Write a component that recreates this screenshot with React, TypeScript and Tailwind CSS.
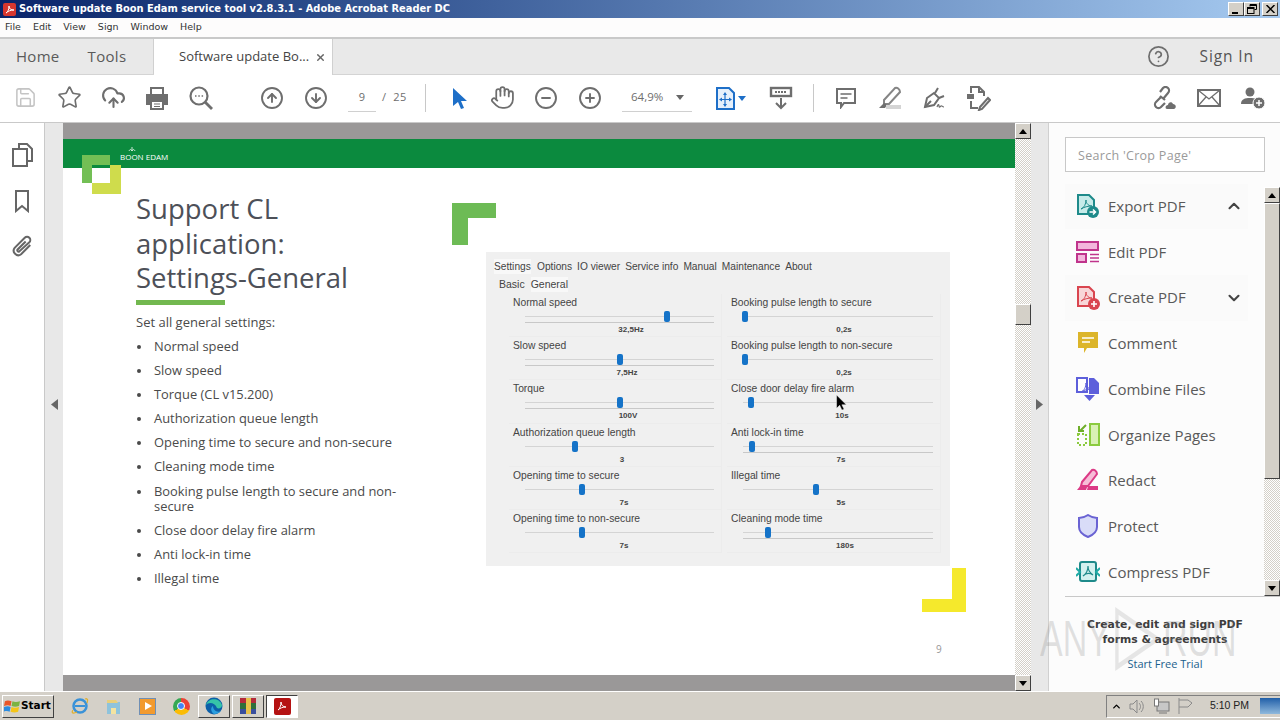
import { ReactNode } from 'react'
import {
  CircleArrowDown,
  CircleArrowUp,
  CircleHelp,
  CircleMinus,
  CirclePlus,
  ChevronDown,
  ChevronUp,
  CloudUpload,
  Hand,
  Save,
  Star,
  X,
} from 'lucide-react'

const menus = ['File', 'Edit', 'View', 'Sign', 'Window', 'Help']

const bullets = [
  'Normal speed',
  'Slow speed',
  'Torque (CL v15.200)',
  'Authorization queue length',
  'Opening time to secure and non-secure',
  'Cleaning mode time',
  'Booking pulse length to secure and non-secure',
  'Close door delay fire alarm',
  'Anti lock-in time',
  'Illegal time',
]

const sliders = [
  { label: 'Normal speed', thumb: 155, value: '32,5Hz', valueX: 122, double: true },
  { label: 'Booking pulse length to secure', thumb: 15, value: '0,2s', valueX: 117, double: false },
  { label: 'Slow speed', thumb: 108, value: '7,5Hz', valueX: 118, double: true },
  { label: 'Booking pulse length to non-secure', thumb: 15, value: '0,2s', valueX: 117, double: false },
  { label: 'Torque', thumb: 108, value: '100V', valueX: 119, double: true },
  { label: 'Close door delay fire alarm', thumb: 21, value: '10s', valueX: 115, double: false },
  { label: 'Authorization queue length', thumb: 63, value: '3', valueX: 113, double: false },
  { label: 'Anti lock-in time', thumb: 22, value: '7s', valueX: 114, double: true },
  { label: 'Opening time to secure', thumb: 70, value: '7s', valueX: 115, double: false },
  { label: 'Illegal time', thumb: 86, value: '5s', valueX: 114, double: false },
  { label: 'Opening time to non-secure', thumb: 70, value: '7s', valueX: 115, double: false },
  { label: 'Cleaning mode time', thumb: 38, value: '180s', valueX: 118, double: true },
]

const ToolSlot = ({ children, className = 'w-[44px]' }: { children: ReactNode; className?: string }) => (
  <div className={`${className} h-[30px] flex items-center justify-center shrink-0`}>{children}</div>
)

const Divider = () => <div className="w-px h-[28px] bg-[#c8c8c8] shrink-0" />

const WinBtn = ({ children }: { children: ReactNode }) => (
  <div className="w-[16px] h-[14px] bg-[#d4d0c8] border border-t-white border-l-white border-r-[#404040] border-b-[#404040] flex items-center justify-center">
    {children}
  </div>
)

const PanelIcon = ({ children }: { children: ReactNode }) => (
  <svg width="24" height="24" viewBox="0 0 24 24" fill="none" className="shrink-0">
    {children}
  </svg>
)

const Swirl = ({ color }: { color: string }) => (
  <path d="M5 15c3-1 5-5 5-9 0 4 3 6 6 6-4 0-8 1-11 3z" stroke={color} strokeWidth="1" fill="none" />
)

const tools: { name: string; chevron?: 'up' | 'down'; icon: ReactNode }[] = [
  {
    name: 'Export PDF',
    chevron: 'up',
    icon: (
      <>
        <path d="M2 1h11l5 5v14H2z" fill="#c6ebe9" stroke="#1e8a8a" strokeWidth="2" />
        <Swirl color="#1e8a8a" />
        <circle cx="17" cy="18" r="6" fill="#1e8a8a" />
        <path d="M13.5 18h6M17 15.5l2.5 2.5-2.5 2.5" stroke="#fff" strokeWidth="1.5" />
      </>
    ),
  },
  {
    name: 'Edit PDF',
    icon: (
      <>
        <rect x="1" y="2" width="21" height="8" fill="#f3b6dc" stroke="#c0348c" strokeWidth="2" />
        <rect x="1" y="14" width="9" height="8" fill="#f3b6dc" stroke="#c0348c" strokeWidth="2" />
        <path d="M14 14.5h9M14 18h9M14 21.5h9" stroke="#c0348c" strokeWidth="1.3" />
      </>
    ),
  },
  {
    name: 'Create PDF',
    chevron: 'down',
    icon: (
      <>
        <path d="M2 1h11l5 5v14H2z" fill="#f8d6d8" stroke="#d9454f" strokeWidth="2" />
        <Swirl color="#d9454f" />
        <circle cx="18" cy="18" r="6" fill="#d9454f" />
        <path d="M15 18h6M18 15v6" stroke="#fff" strokeWidth="1.6" />
      </>
    ),
  },
  {
    name: 'Comment',
    icon: (
      <>
        <path d="M2 1h20v16H11l-3 5v-5H2z" fill="#dcb52a" />
        <path d="M6 7h12M6 11h8" stroke="#fff" strokeWidth="1.5" />
      </>
    ),
  },
  {
    name: 'Combine Files',
    icon: (
      <>
        <path d="M1 1h10v14H1z" fill="#fff" stroke="#5d5fdb" strokeWidth="2" />
        <path d="M13 1h5l5 5v11H13z" fill="#5d5fdb" />
        <Swirl color="#5d5fdb" />
        <path d="M8 18h11l-5.500 6z" fill="#5d5fdb" />
      </>
    ),
  },
  {
    name: 'Organize Pages',
    icon: (
      <>
        <rect x="14" y="1" width="9" height="21" fill="#d9f1b5" stroke="#8bcb3f" strokeWidth="2" />
        <path d="M2 11h8v11H2z" stroke="#8bcb3f" strokeWidth="2" strokeDasharray="2 2" />
        <path d="M10 2 4 8M3 3v5h5" stroke="#6fae2a" strokeWidth="2" />
      </>
    ),
  },
  {
    name: 'Redact',
    icon: (
      <>
        <path d="M6 14 16 2c2-1 5 1 5 4L12 18H5z" fill="#f7bcd7" stroke="#dc3a86" strokeWidth="2" />
        <path d="M1 22l4-5h7l-2 5zM12 18h10v4H11z" fill="#dc3a86" />
      </>
    ),
  },
  {
    name: 'Protect',
    icon: (
      <path d="M12 1c3 2 6 3 9 3v9c0 5-4 8-9 10-5-2-9-5-9-10V4c3 0 6-1 9-3z" fill="#d9dcf8" stroke="#6a63d3" strokeWidth="2" />
    ),
  },
  {
    name: 'Compress PDF',
    icon: (
      <>
        <rect x="4" y="2" width="16" height="19" rx="2" fill="#d3f1ef" stroke="#1e8a8a" strokeWidth="2" />
        <path d="M12 6c0 5-2 8-5 10 3-3 7-3 10-1-3-2-5-5-5-9z" stroke="#1e8a8a" strokeWidth="1.2" />
        <path d="M0 8l4 4-4 4M24 8l-4 4 4 4" stroke="#1eaaa5" strokeWidth="2" fill="none" />
      </>
    ),
  },
]

const checker = 'bg-[repeating-conic-gradient(#d4d0c8_0_25%,#ffffff_0_50%)] bg-[length:2px_2px]'
const raised = 'bg-[#d4d0c8] border border-t-white border-l-white border-r-[#404040] border-b-[#404040]'

const ScrollButton = ({ up }: { up: boolean }) => (
  <div className={`${raised} w-[16px] h-[16px] shrink-0 flex items-center justify-center`}>
    <svg width="8" height="5" viewBox="0 0 8 5">
      <path d={up ? 'M4 0l4 5H0z' : 'M0 0h8L4 5z'} fill="#000" />
    </svg>
  </div>
)

const App = () => {
  return (
    <div className="relative w-[1280px] h-screen overflow-hidden flex flex-col bg-white font-['Open_Sans',sans-serif] text-[#4b4b4b]">
      {/* title bar */}
      <div className="h-[18px] shrink-0 flex items-center bg-gradient-to-r from-[#0a246a] to-[#a6caf0] pl-[3px] pr-[2px]">
        <svg width="13" height="13" viewBox="0 0 13 13" className="mr-[3px] shrink-0">
          <rect width="13" height="13" rx="2" fill="#d7372f" />
          <path d="M3 10c2-1 3-4 3-7 0 3 2 4 5 4-3 0-6 1-8 3z" stroke="#fff" fill="none" />
        </svg>
        <span className="font-['DejaVu_Sans',sans-serif] font-bold text-[9.900px] text-white whitespace-nowrap">
          Software update Boon Edam service tool v2.8.3.1 - Adobe Acrobat Reader DC
        </span>
        <div className="ml-auto flex gap-[2px]">
          <div className="flex">
            <WinBtn>
              <div className="w-[6px] h-[2px] bg-black mt-[7px] -ml-[2px]" />
            </WinBtn>
            <WinBtn>
              <svg width="10" height="10" viewBox="0 0 10 10" fill="none" stroke="#000">
                <path d="M3 2.500V.5h6.500v5H7.500" />
                <path d="M3 1.500h6.500" />
                <rect x=".5" y="3.500" width="6.500" height="6" />
                <path d="M.5 4.500h6.500" />
              </svg>
            </WinBtn>
          </div>
          <WinBtn>
            <svg width="9" height="8" viewBox="0 0 9 8" stroke="#000" strokeWidth="1.500">
              <path d="M.5 0l8 8M8.500 0l-8 8" />
            </svg>
          </WinBtn>
        </div>
      </div>

      {/* menu bar */}
      <div className="h-[19px] shrink-0 flex items-center gap-[12px] pl-[5px] bg-[#fdfcfc] font-['DejaVu_Sans',sans-serif] text-[9.500px] text-[#333]">
        {menus.map((m) => (
          <span key={m}>{m}</span>
        ))}
      </div>

      {/* tabs */}
      <div className="h-[38px] shrink-0 flex items-stretch bg-[#e9e9e9] border-t-2 border-[#c9c9c9] border-b border-b-[#d4d4d4]">
        <div className="w-[154px] flex items-center gap-[28px] pl-[16px] text-[15px] tracking-[0.3px] text-[#5a5a5a] border-r border-[#d0d0d0]">
          <span>Home</span>
          <span>Tools</span>
        </div>
        <div className="w-[179px] -mb-px bg-white flex items-center pl-[25px] text-[13px] text-[#444] border-r border-[#d0d0d0]">
          <span className="whitespace-nowrap">Software update Bo...</span>
          <X size={11} strokeWidth={3} className="ml-[6px] text-[#666]" />
        </div>
        <div className="ml-auto flex items-center pr-[26px]">
          <CircleHelp size={23} strokeWidth={1.8} className="text-[#6e6e6e] mr-[30px]" />
          <span className="text-[15.500px] tracking-[0.9px] text-[#555]">Sign In</span>
        </div>
      </div>

      {/* toolbar */}
      <div className="h-[47px] shrink-0 flex items-center pl-[3px] pb-[2px] text-[#6e6e6e]">
        <ToolSlot><Save size={23} strokeWidth={1.6} className="text-[#c4c4c4]" /></ToolSlot>
        <ToolSlot><Star size={25} strokeWidth={1.6} /></ToolSlot>
        <ToolSlot><CloudUpload size={25} strokeWidth={2} /></ToolSlot>
        <ToolSlot className="w-[43px]">
          <svg width="24" height="24" viewBox="0 0 24 24" fill="none">
            <path d="M6 8V2h12v6" stroke="currentColor" strokeWidth="2" />
            <path d="M1 8h22v11h-4v-4H5v4H1z" fill="currentColor" />
            <path d="M6 15h12v8H6z" stroke="currentColor" strokeWidth="2" />
            <path d="M9 18h6M9 20.500h6" stroke="currentColor" strokeWidth="1.200" />
          </svg>
        </ToolSlot>
        <ToolSlot className="w-[45px]">
          <svg width="26" height="26" viewBox="0 0 26 26" fill="none" stroke="currentColor" strokeWidth="2.2">
            <circle cx="11" cy="11" r="8.500" />
            <path d="M17 17l7 7" strokeWidth="2.800" />
            <path d="M7 11h1.500M10.300 11h1.500M13.600 11h1.500" strokeWidth="1.500" />
          </svg>
        </ToolSlot>
        <div className="w-[27px] shrink-0" />
        <ToolSlot><CircleArrowUp size={24} strokeWidth={1.9} /></ToolSlot>
        <ToolSlot><CircleArrowDown size={24} strokeWidth={1.9} /></ToolSlot>
        <div className="ml-[10px] w-[28px] h-[29px] border-b border-[#d0d0d0] flex items-center justify-center text-[11px] shrink-0">9</div>
        <div className="w-[49px] pl-[6px] text-[11px] tracking-[0.5px] whitespace-nowrap shrink-0">/&nbsp;&nbsp;25</div>
        <Divider />
        <ToolSlot className="w-[40px] ml-[14px]">
          <svg width="16" height="22" viewBox="0 0 16 22"><path d="M1 1l14 13H9l3 7-3 1-3-7-5 4z" fill="#1e6fc8" /></svg>
        </ToolSlot>
        <ToolSlot><Hand size={25} strokeWidth={1.7} /></ToolSlot>
        <ToolSlot><CircleMinus size={24} strokeWidth={1.9} /></ToolSlot>
        <ToolSlot><CirclePlus size={24} strokeWidth={1.9} /></ToolSlot>
        <div className="ml-[10px] w-[70px] h-[29px] border-b border-[#d0d0d0] flex items-center justify-between pl-[9px] pr-[8px] text-[11.500px] shrink-0">
          <span>64,9%</span>
          <svg width="8" height="5" viewBox="0 0 8 5"><path d="M0 0h8L4 5z" fill="#666" /></svg>
        </div>
        <ToolSlot className="w-[44px] ml-[14px]">
          <svg width="38" height="24" viewBox="0 0 38 24" fill="none">
            <path d="M8 2h12l5 5v16H8z" fill="#e6f0fb" stroke="#1e6fc8" strokeWidth="2" />
            <path d="M16 9v9M12 13.500h9" stroke="#1e6fc8" strokeWidth="1.200" />
            <path d="M16 6l-2 3h4zM16 21l-2-3h4zM10 13.500l3-2v4zM23 13.500l-3-2v4z" fill="#1e6fc8" />
            <path d="M29 10h8l-4 5z" fill="#1e6fc8" />
          </svg>
        </ToolSlot>
        <ToolSlot className="w-[44px] ml-[9px]">
          <svg width="24" height="24" viewBox="0 0 24 24" fill="none" stroke="currentColor">
            <rect x="2" y="2" width="20" height="8" strokeWidth="2.400" />
            <path d="M6 6h12" strokeWidth="2" strokeDasharray="2 1" />
            <path d="M12 12v10M7 17l5 5 5-5" strokeWidth="2" />
          </svg>
        </ToolSlot>
        <div className="ml-[10px]"><Divider /></div>
        <ToolSlot className="w-[44px] ml-[10px]">
          <svg width="22" height="22" viewBox="0 0 22 22" fill="none" stroke="currentColor" strokeWidth="2">
            <path d="M2 2h18v14H9l-3 4v-4H2z" />
            <path d="M5.500 7h11M5.500 11h7" strokeWidth="1.300" />
          </svg>
        </ToolSlot>
        <ToolSlot>
          <svg width="26" height="24" viewBox="0 0 26 24" fill="none">
            <path d="M7 14 18 2c2-1 5 1 5 4L12 18H7z" stroke="#858585" strokeWidth="2" />
            <path d="M2 22l5-5 3 2-2 3z" fill="#6e6e6e" />
            <rect x="9" y="19" width="15" height="4" fill="#d4d4d4" />
          </svg>
        </ToolSlot>
        <ToolSlot>
          <svg width="24" height="24" viewBox="0 0 24 24" fill="none" stroke="currentColor" strokeWidth="2">
            <path d="M3 21l2-9 7-5 5 5-5 7z" />
            <path d="M13 7l3-5M17 12l5-2M3 21l6-6" />
            <path d="M15 21c1-3 2-3 2-1s1 1 2 0 1 1 3 1" strokeWidth="1.200" />
          </svg>
        </ToolSlot>
        <ToolSlot>
          <svg width="26" height="26" viewBox="0 0 26 26" fill="none" stroke="currentColor" strokeWidth="2">
            <path d="M6 8V2h8l5 5v4M6 16v7h7M14 2v5h5" />
            <rect x="2" y="9" width="7" height="5" fill="currentColor" stroke="none" />
            <path d="M15 22l8-9 2 2-8 9-3 1z" />
          </svg>
        </ToolSlot>
        <div className="ml-auto flex pr-[5px]">
          <ToolSlot>
            <svg width="26" height="24" viewBox="0 0 26 24" fill="none" stroke="currentColor" strokeWidth="2.200">
              <path d="M9 11l-5 5a3.500 3.500 0 0 0 5 5l4-4M11 13l5-6a3.500 3.500 0 0 0-5-5L8 6" />
              <path d="M8 10l5 4" />
              <path d="M15 23c-2 0-2-4 1-4 0-3 4-4 5-1 3 0 4 4 1 5z" fill="currentColor" stroke="none" />
            </svg>
          </ToolSlot>
          <ToolSlot>
            <svg width="24" height="20" viewBox="0 0 24 20" fill="none" stroke="currentColor" strokeWidth="2">
              <rect x="1" y="2" width="22" height="16" />
              <path d="M1 2l11 9 11-9M1 18l8-9M23 18l-8-9" strokeWidth="1.300" />
            </svg>
          </ToolSlot>
          <ToolSlot>
            <svg width="26" height="24" viewBox="0 0 26 24">
              <circle cx="10" cy="6" r="4.500" fill="#6e6e6e" />
              <path d="M1 18c0-5 4-6 9-6s8 1 8 3v3z" fill="#6e6e6e" />
              <circle cx="19" cy="17" r="6" fill="#6e6e6e" stroke="#fff" />
              <path d="M16 17h6M19 14v6" stroke="#fff" strokeWidth="1.500" />
            </svg>
          </ToolSlot>
        </div>
      </div>

      {/* main */}
      <div className="flex-1 min-h-0 flex border-t border-[#c9c9c9]">
        {/* left rail */}
        <div className="w-[45px] shrink-0 border-r border-[#c9c9c9] flex flex-col items-center gap-[21px] pt-[19px] text-[#666]">
          <svg width="22" height="26" viewBox="0 0 22 26" fill="none" stroke="currentColor" strokeWidth="2">
            <path d="M8 6V2h8l5 5v12h-5" />
            <path d="M2 7h14v17H2z" />
          </svg>
          <svg width="16" height="24" viewBox="0 0 16 24" fill="none" stroke="currentColor" strokeWidth="2">
            <path d="M2 2h12v20l-6-5-6 5z" />
          </svg>
          <svg width="22" height="24" viewBox="0 0 24 24" fill="none" stroke="currentColor" strokeWidth="2.200">
            <path d="M21 11 11 21a5 5 0 0 1-7-7L15 3a3.500 3.500 0 0 1 5 5L9 18a1.500 1.500 0 0 1-2-2l9-9" />
          </svg>
        </div>
        <div className="w-[18px] shrink-0 bg-[#e8e8e8] flex items-center justify-center pb-[5px]">
          <svg width="7" height="11" viewBox="0 0 7 11"><path d="M7 0v11L0 5.500z" fill="#666" /></svg>
        </div>

        {/* document */}
        <div className="w-[952px] shrink-0 flex flex-col bg-[#9a9898]">
          <div className="h-[16px] shrink-0" />
          <div className="relative h-[536px] shrink-0 bg-white flex flex-col overflow-hidden">
            <div className="h-[29px] shrink-0 bg-[#0b8a3e] flex flex-col items-start justify-end pl-[57px] pb-[7px]">
              <svg width="8" height="6" viewBox="0 0 8 6" fill="none" stroke="#fff" strokeWidth="0.800" className="ml-[8px] mb-px">
                <path d="M1 5c1-2 2-2 3 0 1-2 2-2 3 0M4 5V1" />
              </svg>
              <span className="text-[8px] leading-none text-white whitespace-nowrap">BOON EDAM</span>
            </div>
            <div className="absolute left-[19px] top-[16px] w-[39px] h-[39px]">
              <div className="absolute left-[10px] top-[10px] w-[29px] h-[29px] bg-[#cfdc4c]" />
              <div className="absolute left-0 top-0 w-[28px] h-[28px] bg-[#73bf55]" />
              <div className="absolute left-[10px] top-[10px] w-[18px] h-[18px] bg-white border-t-[3px] border-[#0b8a3e]" />
            </div>
            <div className="flex flex-1 min-h-0">
              <div className="w-[423px] shrink-0 pl-[73px] pt-[24px] text-[#4a4a4a]">
                <h1 className="text-[27.500px] leading-[34.500px] text-[#4d5058]">
                  Support CL<br />application:<br />Settings-General
                </h1>
                <div className="w-[89px] h-[5px] bg-[#72b84f] mt-[4px] mb-[9px]" />
                <p className="text-[13px] leading-[17px]">Set all general settings:</p>
                <ul className="mt-[8.500px] flex flex-col gap-[9px] text-[12.900px] leading-[15.100px] w-[263px]">
                  {bullets.map((b) => (
                    <li key={b} className="flex">
                      <span className="w-[18px] shrink-0 pl-[1px] pt-[6px]">
                        <span className="block w-[4px] h-[4px] rounded-full bg-[#4a4a4a]" />
                      </span>
                      <span>{b}</span>
                    </li>
                  ))}
                </ul>
              </div>
              <div className="pt-[84px]">
                <div className="w-[464px] h-[314px] bg-[#f0f0f0] pl-[8px] pt-[7px] font-['Liberation_Sans',sans-serif] text-[#444]">
                  <div className="flex gap-[5px] text-[10.200px] h-[15px] items-center whitespace-nowrap">
                    <span className="w-[37px] mr-[1px] bg-[#f8f8f8]">Settings</span>
                    <span>Options</span>
                    <span>IO viewer</span>
                    <span>Service info</span>
                    <span>Manual</span>
                    <span>Maintenance</span>
                    <span>About</span>
                  </div>
                  <div className="flex gap-[6px] text-[10.500px] pl-[5px] mt-[3px] h-[15px] items-center">
                    <span>Basic</span>
                    <span className="bg-[#f8f8f8]">General</span>
                  </div>
                  <div className="grid grid-cols-[213px_214px] gap-x-[5px] ml-[15px] mt-[2px]">
                    {sliders.map((s) => (
                      <div key={s.label} className="relative h-[43.200px] border-b border-r border-[#ececec]">
                        <div className="pl-[4px] pt-[3px] text-[10.300px] leading-[12px] whitespace-nowrap">{s.label}</div>
                        <div className="ml-[16px] mr-[7px] mt-[7px] h-px bg-[#d4d4d4]" />
                        {s.double && <div className="ml-[16px] mr-[7px] mt-[5px] h-px bg-[#c8c8c8]" />}
                        <div
                          className="absolute top-[17px] w-[6px] h-[11px] rounded-[2px] bg-[#1573c8]"
                          style={{ left: s.thumb }}
                        />
                        <div
                          className="absolute top-[31px] text-[8px] font-bold leading-[10px] -translate-x-1/2 whitespace-nowrap"
                          style={{ left: s.valueX }}
                        >
                          {s.value}
                        </div>
                      </div>
                    ))}
                  </div>
                </div>
              </div>
            </div>
            {/* slide decoration */}
            <div className="absolute left-[389px] top-[64px] w-[44px] h-[42px] bg-[#6dbb55]">
              <div className="absolute right-0 bottom-0 w-[28px] h-[27px] bg-white" />
            </div>
            <div className="absolute left-[859px] top-[429px] w-[44px] h-[44px] bg-[#f5e92c]">
              <div className="absolute left-0 top-0 w-[30px] h-[31px] bg-white" />
            </div>
            <span className="absolute left-[873px] top-[503px] text-[10px] text-[#999]">9</span>
            <svg width="12" height="16" viewBox="0 0 12 18" className="absolute left-[772px] top-[256px]">
              <path d="M1 0v15l3.500-3.500L7 17l2.500-1-2.500-5h5z" fill="#000" stroke="#fff" strokeWidth="0.500" />
            </svg>
          </div>
          <div className="flex-1" />
        </div>

        {/* doc scrollbar */}
        <div className={`${checker} w-[16px] shrink-0 flex flex-col`}>
          <ScrollButton up />
          <div className="flex-1 pt-[165px]">
            <div className={`${raised} w-[16px] h-[21px]`} />
          </div>
          <ScrollButton up={false} />
        </div>
        <div className="w-[18px] shrink-0 bg-[#e8e8e8] border-r border-[#d0d0d0] flex items-center justify-center pb-[5px]">
          <svg width="7" height="11" viewBox="0 0 7 11"><path d="M0 0v11l7-5.500z" fill="#666" /></svg>
        </div>

        {/* tools pane */}
        <div className="flex-1 min-w-0 bg-[#fcfcfc] flex flex-col pl-[16px]">
          <div className="mt-[14px] w-[200px] h-[35px] shrink-0 border border-[#c8c8c8] bg-white flex items-center pl-[12px] pt-[3px] text-[12.500px] tracking-[0.3px] text-[#9a9a9a]">
            Search 'Crop Page'
          </div>
          <div className="mt-[15px] h-[410px] shrink-0 flex border-b border-[#c8c8c8]">
            <div className="w-[199px] shrink-0 flex flex-col -mt-[3.500px]">
              {tools.map((t) => (
                <div key={t.name} className={`h-[45.700px] w-[183px] shrink-0 flex items-center pl-[11px] ${t.chevron ? 'bg-[#fafafa]' : ''}`}>
                  <PanelIcon>{t.icon}</PanelIcon>
                  <span className="ml-[8px] text-[15px] text-[#595959] whitespace-nowrap">{t.name}</span>
                  {t.chevron === 'up' && <ChevronUp size={18} strokeWidth={2.800} className="ml-auto mr-[5px] text-[#444]" />}
                  {t.chevron === 'down' && <ChevronDown size={18} strokeWidth={2.800} className="ml-auto mr-[5px] text-[#444]" />}
                </div>
              ))}
            </div>
            <div className={`${checker} w-[16px] shrink-0 flex flex-col`}>
              <ScrollButton up />
              <div className={`${raised} w-[16px] h-[276px]`} />
              <div className="flex-1" />
              <ScrollButton up={false} />
            </div>
          </div>
          <div className="mt-[20px] w-[200px] text-center font-['DejaVu_Sans',sans-serif] font-bold text-[10.800px] leading-[15px] text-[#3d3d3d]">
            Create, edit and sign PDF<br />forms &amp; agreements
          </div>
          <div className="mt-[9px] w-[200px] text-center text-[11px] text-[#1b5f8c]">Start Free Trial</div>
        </div>
      </div>

      {/* taskbar */}
      <div className="h-[29px] shrink-0 bg-[#d4d0c8] border-t border-white flex items-center pl-[2px]">
        <div className={`${raised} w-[52px] h-[23px] flex items-center pl-[1px]`}>
          <svg width="16" height="15" viewBox="0 0 17 15" className="shrink-0">
            <path d="M1 2c2-1 4-1 7 0l-1 5C5 6 3 6 0 7z" fill="#e8562a" />
            <path d="M9 2c2 1 5 1 8 0l-1 5c-3 1-5 1-8 0z" fill="#7cb342" />
            <path d="M0 8c3-1 5-1 7 0l-1 5c-2-1-4-1-7 0z" fill="#2a8be0" />
            <path d="M8 8c2 1 5 1 8 0l-1 5c-3 1-5 1-8 0z" fill="#f5c518" />
          </svg>
          <span className="ml-px font-['DejaVu_Sans',sans-serif] font-bold text-[10.500px] text-black">Start</span>
        </div>
        <div className="ml-[9px] flex items-center">
          <div className="w-[34px] h-[23px] flex items-center justify-center">
            <svg width="18" height="18" viewBox="0 0 18 18" fill="none">
              <circle cx="9" cy="9" r="6.500" stroke="#3a92d8" strokeWidth="2.500" />
              <path d="M4 9h10" stroke="#3a92d8" strokeWidth="2" />
              <path d="M14 2c3-1 3 1 2 4M2 13c-2 3 0 4 4 2" stroke="#e0b030" strokeWidth="1.300" />
            </svg>
          </div>
          <div className="w-[33px] h-[23px] flex items-center justify-center">
            <svg width="17" height="17" viewBox="0 0 17 17">
              <path d="M2 4h13v12H2z" fill="#8ec3dc" />
              <path d="M2 2h9l2 3H2z" fill="#e8cf7c" />
              <rect x="6" y="10" width="5" height="6" fill="#f4e3a0" />
            </svg>
          </div>
          <div className="w-[34px] h-[23px] flex items-center justify-center">
            <div className="w-[17px] h-[17px] border border-[#6f8fb5] bg-[#f29a2e] flex items-center justify-center">
              <div className="w-0 h-0 border-l-[7px] border-l-white border-y-[4.500px] border-y-transparent ml-[2px]" />
            </div>
          </div>
          <div className="w-[34px] h-[23px] flex items-center justify-center">
            <div className="w-[17px] h-[17px] rounded-full bg-[conic-gradient(#ea4335_0_33%,#fbbc05_33%_66%,#34a853_66%_100%)] flex items-center justify-center">
              <div className="w-[8px] h-[8px] rounded-full bg-[#4285f4] border border-white" />
            </div>
          </div>
          <div className={`${raised} w-[32px] h-[23px] flex items-center justify-center`}>
            <svg width="18" height="18" viewBox="0 0 18 18">
              <circle cx="9" cy="9" r="8.500" fill="#0c5fa8" />
              <path d="M1 8C3 1 14 0 17 8c0 3-3 4-5 3C10 5 3 5 1 8z" fill="#36c4a8" />
              <path d="M9 17c-3-2-4-6-1-8 0 4 4 7 8 5-2 2-4 3-7 3z" fill="#2b9fe0" />
            </svg>
          </div>
          <div className={`${raised} ml-[2px] w-[32px] h-[23px] flex items-center justify-center`}>
            <div className="w-[16px] h-[16px] bg-[linear-gradient(#b52a3a_0_33%,#2f6f3a_33%_66%,#3a4f9e_66%_100%)] flex items-center justify-center">
              <div className="w-[5px] h-[16px] bg-[#e8c24a]" />
            </div>
          </div>
          <div className="ml-[2px] w-[32px] h-[23px] bg-white border border-t-[#404040] border-l-[#404040] border-r-white border-b-white flex items-center justify-center">
            <div className="w-[17px] h-[17px] rounded-[2px] bg-[#b51212] flex items-center justify-center">
              <svg width="12" height="12" viewBox="0 0 12 12" fill="none">
                <path d="M2 10c2-1 3-5 3-8 0 3 2 5 5 5-3 0-6 1-8 3z" stroke="#fff" />
              </svg>
            </div>
          </div>
        </div>
        <div className="ml-auto w-[174px] h-[23px] border-l border-t border-b border-t-[#808080] border-l-[#808080] border-b-white flex items-center pl-[4px] text-[#555]">
          <ChevronUp size={11} strokeWidth={3} className="text-black shrink-0" />
          <svg width="16" height="15" viewBox="0 0 16 15" fill="none" stroke="#8a8a8a" className="ml-[7px] shrink-0">
            <path d="M1 5h3l4-4v13l-4-4H1zM10 4c2 2 2 5 0 7M12 2c3 3 3 8 0 11" />
          </svg>
          <svg width="17" height="16" viewBox="0 0 17 16" fill="none" stroke="#777" className="ml-[8px] shrink-0">
            <rect x="4" y="4" width="12" height="9" fill="#c7c7c7" />
            <rect x="1.500" y="1" width="4" height="7" fill="#fff" />
            <path d="M6 15h8" />
          </svg>
          <svg width="16" height="16" viewBox="0 0 16 16" fill="none" stroke="#8a8a8a" className="ml-[7px] shrink-0">
            <path d="M2 0v16M2 2h9l4 3-4 4H2" />
          </svg>
          <span className="ml-[17px] font-['Liberation_Sans',sans-serif] text-[10.500px] text-[#222] whitespace-nowrap">5:10 PM</span>
          <div className="ml-auto w-[20px] h-[16px] bg-gradient-to-b from-[#1f5fa8] to-[#8fb9dc]" />
        </div>
      </div>

      {/* ANY.RUN watermark */}
      <div className="absolute left-[1040px] top-[606px] origin-left scale-x-[0.68] flex items-center text-[50px] font-['Liberation_Sans',sans-serif] text-[#8a8a8a]/25 leading-none pointer-events-none whitespace-nowrap">
        <span>ANY</span>
        <svg width="78" height="66" viewBox="0 0 90 80" fill="none" className="shrink-0">
          <path d="M10 6l72 34-72 34z" stroke="#8a8a8a" strokeOpacity="0.2" strokeWidth="6" />
        </svg>
        <span>RUN</span>
      </div>
    </div>
  )
}

export default App
